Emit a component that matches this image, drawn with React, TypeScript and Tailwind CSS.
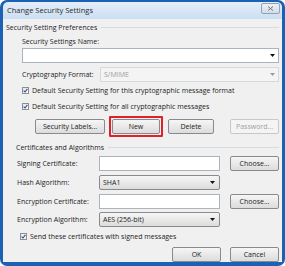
import React from "react";

function Arrow({ disabled = false }: { disabled?: boolean }) {
  return (
    <svg width="5" height="3" viewBox="0 0 5 3" className="shrink-0">
      <path d="M0 0H5L2.5 3Z" fill={disabled ? "#9a9a9a" : "#111"} />
    </svg>
  );
}

function Check({ label }: { label: string }) {
  return (
    <div className="flex h-[9px] items-center gap-[3px]">
      <span className="flex h-[7px] w-[7px] items-center justify-center border border-[#8e8f8f] bg-gradient-to-br from-[#e6e6e6] to-white">
        <svg width="5" height="5" viewBox="0 0 5 5">
          <path d="M0.6 2.6L2 4L4.4 0.8" fill="none" stroke="#2c4f9e" strokeWidth="1.1" />
        </svg>
      </span>
      <span>{label}</span>
    </div>
  );
}

function Btn({ label, w, disabled = false }: { label: string; w: string; disabled?: boolean }) {
  return (
    <button
      className={`flex h-[15px] ${w} items-center justify-center rounded-[2px] border ${
        disabled
          ? "border-[#c8c8c8] bg-[#f4f4f4] text-[#a0a0a0]"
          : "border-[#8a8a8a] bg-gradient-to-b from-[#f6f6f6] to-[#dcdcdc] text-[#1b1b1b]"
      }`}
    >
      {label}
    </button>
  );
}

function Header({ label }: { label: string }) {
  return (
    <div className="flex h-[10px] items-center gap-[4px]">
      <span>{label}</span>
      <span className="h-px flex-1 bg-[#d5dbe1]" />
    </div>
  );
}

export default function App() {
  return (
    <div className="flex h-[266px] w-[285px] flex-col rounded-[7px] bg-[#1b62b4] px-[3px] pt-[2px] pb-[4px] font-['Open_Sans',sans-serif] text-[7px] leading-none text-[#1b1b1b]">
      <div className="flex h-[19px] items-center justify-between rounded-t-[5px] bg-gradient-to-b from-[#e4eef9] to-[#cbdef2] pr-[2px] pl-[4px]">
        <span className="text-[7.5px] text-[#2a2a2a]">Change Security Settings</span>
        <span className="mb-[4px] flex h-[11px] w-[19px] items-center justify-center rounded-[2px] border border-[#8fa3b8] bg-gradient-to-b from-[#eef2f6] to-[#d3dbe4]">
          <svg width="7" height="5" viewBox="0 0 7 5">
            <path d="M1 0.5L6 4.5M6 0.5L1 4.5" stroke="#6b7785" strokeWidth="1" />
          </svg>
        </span>
      </div>

      <div className="flex flex-1 flex-col bg-[#f0f0f0] pr-[3px] pl-[3px]">
        <div className="mt-[3px]">
          <Header label="Security Setting Preferences" />
        </div>

        <div className="flex flex-col pl-[16px]">
          <div className="mt-[4px] flex h-[10px] items-center">Security Settings Name:</div>
          <div className="mt-[2px] flex h-[15px] items-center justify-end border border-[#abb3bc] bg-white pr-[3px]">
            <Arrow />
          </div>

          <div className="mt-[4px] flex h-[15px] items-center">
            <span className="w-[78px] shrink-0">Cryptography Format:</span>
            <div className="flex h-full flex-1 items-center justify-between border border-[#d6d9dd] bg-[#f4f4f4] pr-[3px] pl-[3px] text-[#9a9a9a]">
              <span>S/MIME</span>
              <Arrow disabled />
            </div>
          </div>

          <div className="mt-[4px]">
            <Check label="Default Security Setting for this cryptographic message format" />
          </div>
          <div className="mt-[7px]">
            <Check label="Default Security Setting for all cryptographic messages" />
          </div>

          <div className="mt-[5px] flex items-center pl-[13px]">
            <Btn label="Security Labels..." w="w-[70px]" />
            <div className="ml-[4px] rounded-[1px] border-2 border-[#e0202a] p-px">
              <Btn label="New" w="w-[48px]" />
            </div>
            <div className="ml-[5px]">
              <Btn label="Delete" w="w-[46px]" />
            </div>
            <div className="ml-auto">
              <Btn label="Password..." w="w-[49px]" disabled />
            </div>
          </div>
        </div>

        <div className="mt-[5px] pl-[10px]">
          <Header label="Certificates and Algorithms" />
        </div>

        <div className="flex flex-col pl-[11px]">
          <div className="mt-[4px] flex h-[15px] items-center">
            <span className="w-[82px] shrink-0">Signing Certificate:</span>
            <div className="h-full w-[121px] border border-[#abb3bc] bg-white" />
            <div className="ml-auto">
              <Btn label="Choose..." w="w-[49px]" />
            </div>
          </div>

          <div className="mt-[4px] flex h-[15px] items-center">
            <span className="w-[82px] shrink-0">Hash Algorithm:</span>
            <div className="flex h-full w-[121px] items-center justify-between rounded-[2px] border border-[#8a8a8a] bg-gradient-to-b from-[#f6f6f6] to-[#dcdcdc] pr-[4px] pl-[3px]">
              <span>SHA1</span>
              <Arrow />
            </div>
          </div>

          <div className="mt-[4px] flex h-[15px] items-center">
            <span className="w-[82px] shrink-0">Encryption Certificate:</span>
            <div className="h-full w-[121px] border border-[#abb3bc] bg-white" />
            <div className="ml-auto">
              <Btn label="Choose..." w="w-[49px]" />
            </div>
          </div>

          <div className="mt-[3px] flex h-[15px] items-center">
            <span className="w-[82px] shrink-0">Encryption Algorithm:</span>
            <div className="flex h-full w-[121px] items-center justify-between rounded-[2px] border border-[#8a8a8a] bg-gradient-to-b from-[#f6f6f6] to-[#dcdcdc] pr-[4px] pl-[3px]">
              <span>AES (256-bit)</span>
              <Arrow />
            </div>
          </div>

          <div className="mt-[5px] pl-[3px]">
            <Check label="Send these certificates with signed messages" />
          </div>
        </div>

        <div className="mt-[6px] flex justify-end gap-[9px]">
          <Btn label="OK" w="w-[49px]" />
          <Btn label="Cancel" w="w-[49px]" />
        </div>
      </div>
    </div>
  );
}
